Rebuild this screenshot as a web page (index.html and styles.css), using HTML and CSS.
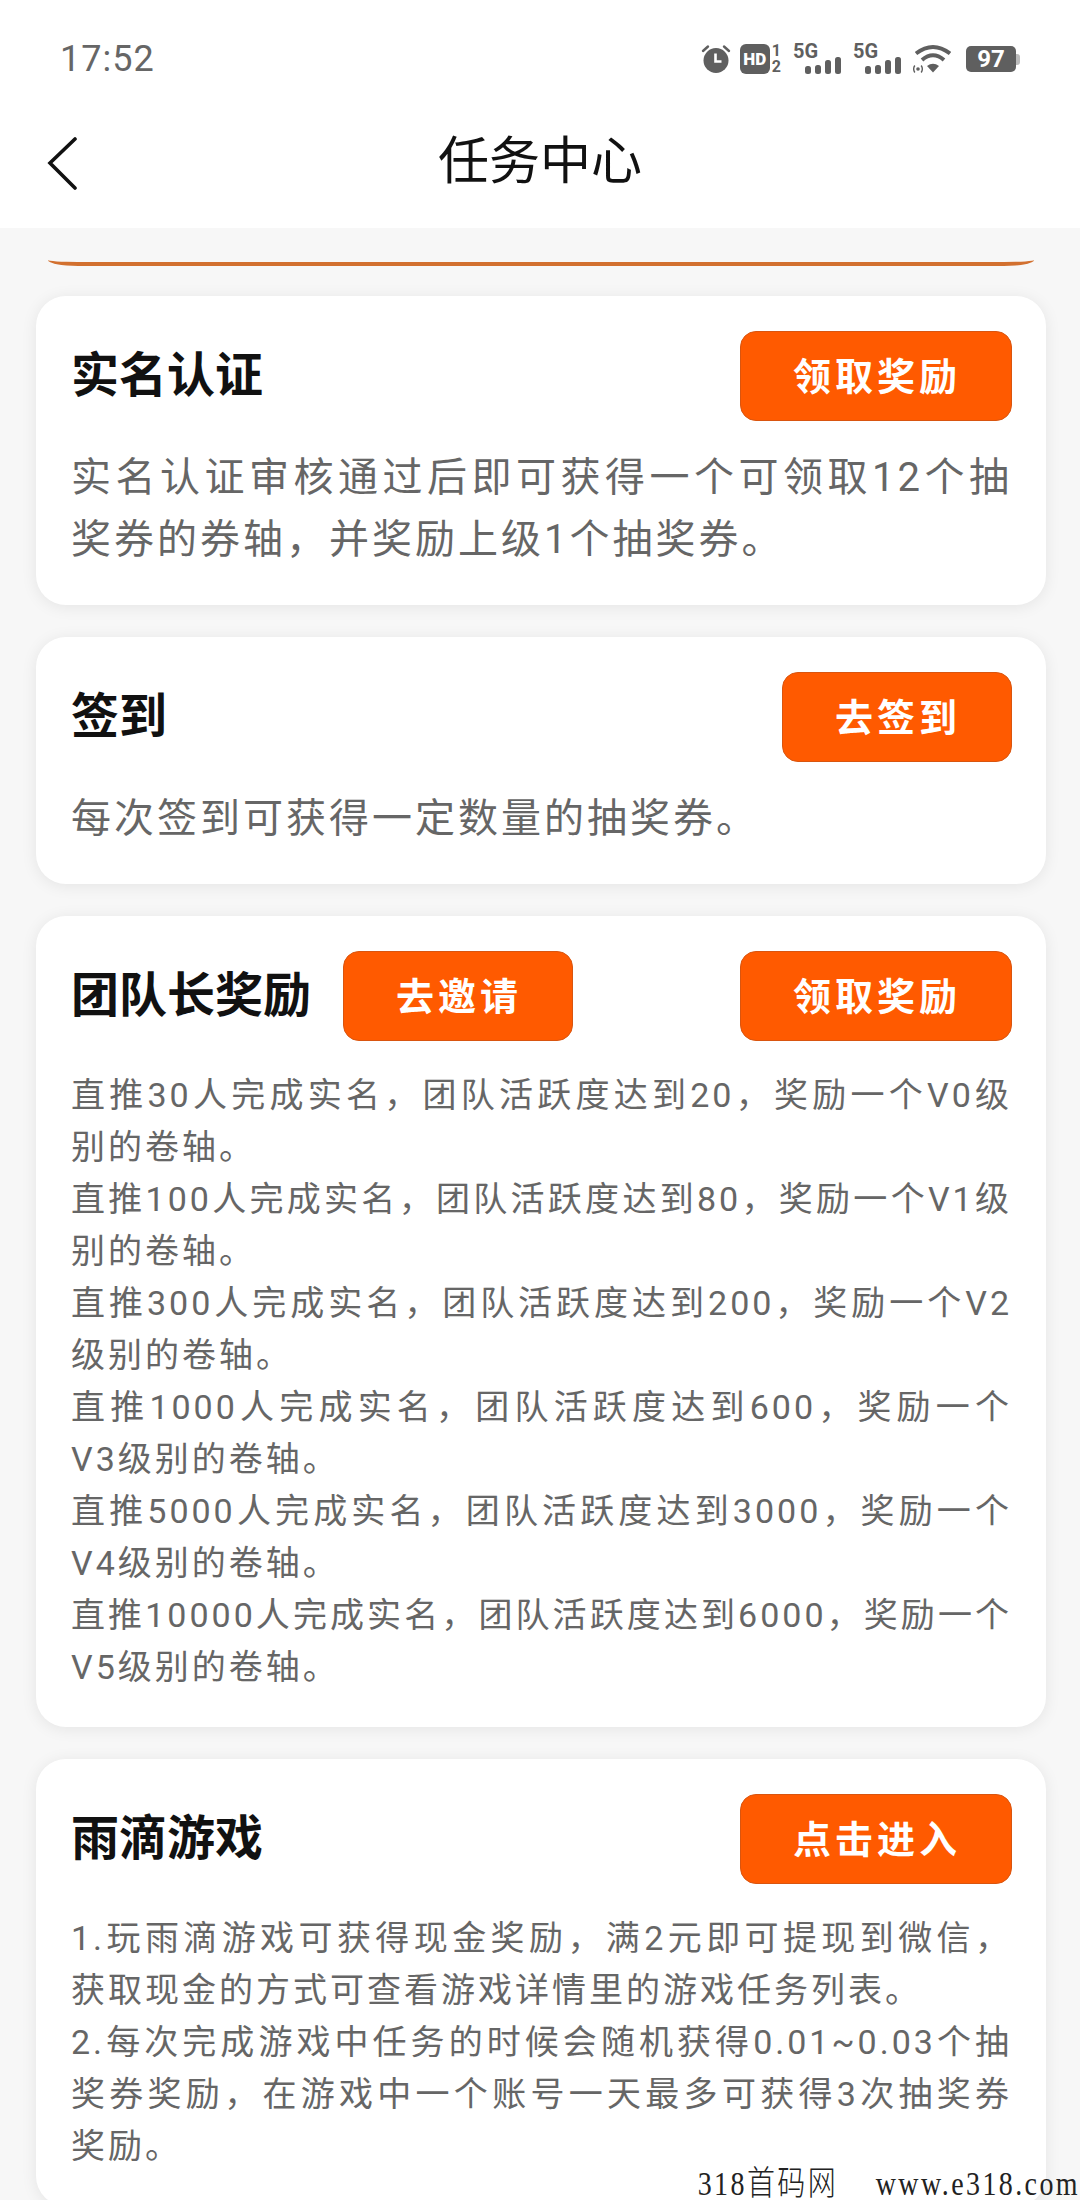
FILE: index.html
```html
<!DOCTYPE html>
<html lang="zh-CN">
<head>
  <meta charset="UTF-8">
  <meta name="viewport" content="width=device-width, initial-scale=1.0">
  <title>任务中心</title>
  <link rel="stylesheet" href="styles.css">
</head>
<body>
  <div class="page">
    <div class="status-bar">
      <span class="time">17:52</span>
      <div class="status-icons">
        <svg class="icon-alarm" width="30" height="30" viewBox="0 0 30 30">
          <circle cx="15" cy="16.5" r="12.5" fill="#5f5f5f"/>
          <path d="M2 7 L7 2.500 M28 7 L23 2.500" stroke="#5f5f5f" stroke-width="2.400" stroke-linecap="round"/>
          <path d="M14.500 9.500 V17.500 H20.500" stroke="#fff" stroke-width="2.600" fill="none"/>
        </svg>
        <div class="hd-group">
          <span class="hd-box">HD</span>
          <span class="hd-nums"><span>1</span><span>2</span></span>
        </div>
        <div class="signal">
          <span class="signal-label">5G</span>
          <svg width="36" height="17" viewBox="0 0 36 17">
            <rect x="0" y="9" width="6" height="8" rx="2.500" fill="#5f5f5f"/>
            <rect x="10" y="8" width="6" height="9" rx="2.500" fill="#5f5f5f"/>
            <rect x="20" y="3" width="6" height="14" rx="2.500" fill="#5f5f5f"/>
            <rect x="30" y="0" width="6" height="17" rx="2.500" fill="#5f5f5f"/>
          </svg>
        </div>
        <div class="signal">
          <span class="signal-label">5G</span>
          <svg width="36" height="17" viewBox="0 0 36 17">
            <rect x="0" y="9" width="6" height="8" rx="2.500" fill="#5f5f5f"/>
            <rect x="10" y="8" width="6" height="9" rx="2.500" fill="#5f5f5f"/>
            <rect x="20" y="3" width="6" height="14" rx="2.500" fill="#5f5f5f"/>
            <rect x="30" y="0" width="6" height="17" rx="2.500" fill="#5f5f5f"/>
          </svg>
        </div>
        <svg class="icon-wifi" width="38" height="30" viewBox="0 0 38 30">
          <path d="M3 9.500 Q20 -3.500 37 9.500" stroke="#5f5f5f" stroke-width="4" fill="none"/>
          <path d="M9 16 Q20 6.500 31 16" stroke="#5f5f5f" stroke-width="4" fill="none"/>
          <path d="M14 22 Q20 17.500 26 22 L20 28.500 Z" fill="#5f5f5f"/>
          <circle cx="5" cy="25" r="1.800" fill="#5f5f5f"/>
          <path d="M1.800 21.500 Q-0.500 25 1.800 28.500 M8.200 21.500 Q10.500 25 8.200 28.500" stroke="#5f5f5f" stroke-width="1.400" fill="none"/>
        </svg>
        <div class="battery">
          <span class="battery-body">97</span>
          <span class="battery-tip"></span>
        </div>
      </div>
    </div>

    <header class="nav">
      <svg class="nav-back" width="30" height="54" viewBox="0 0 30 54">
        <path d="M28 2 L3 26 L28 51" stroke="#111" stroke-width="3.600" fill="none" stroke-linecap="round" stroke-linejoin="miter"/>
      </svg>
      <h1 class="nav-title">任务中心</h1>
    </header>

    <main class="list">
      <div class="prev-card-edge"></div>

      <section class="card">
        <div class="card-head">
          <h2 class="card-title">实名认证</h2>
          <button class="btn">领取奖励</button>
        </div>
        <p class="desc desc-lg">实名认证审核通过后即可获得一个可领取12个抽奖券的券轴，并奖励上级1个抽奖券。</p>
      </section>

      <section class="card">
        <div class="card-head">
          <h2 class="card-title">签到</h2>
          <button class="btn">去签到</button>
        </div>
        <p class="desc desc-lg">每次签到可获得一定数量的抽奖券。</p>
      </section>

      <section class="card">
        <div class="card-head">
          <h2 class="card-title">团队长奖励</h2>
          <button class="btn btn-invite">去邀请</button>
          <button class="btn">领取奖励</button>
        </div>
        <div class="desc-block">
          <p class="desc">直推30人完成实名，团队活跃度达到20，奖励一个V0级别的卷轴。</p>
          <p class="desc">直推100人完成实名，团队活跃度达到80，奖励一个V1级别的卷轴。</p>
          <p class="desc">直推300人完成实名，团队活跃度达到200，奖励一个V2级别的卷轴。</p>
          <p class="desc">直推1000人完成实名，团队活跃度达到600，奖励一个V3级别的卷轴。</p>
          <p class="desc">直推5000人完成实名，团队活跃度达到3000，奖励一个V4级别的卷轴。</p>
          <p class="desc">直推10000人完成实名，团队活跃度达到6000，奖励一个V5级别的卷轴。</p>
        </div>
      </section>

      <section class="card">
        <div class="card-head">
          <h2 class="card-title">雨滴游戏</h2>
          <button class="btn">点击进入</button>
        </div>
        <div class="desc-block">
          <p class="desc">1.玩雨滴游戏可获得现金奖励，满2元即可提现到微信，获取现金的方式可查看游戏详情里的游戏任务列表。</p>
          <p class="desc">2.每次完成游戏中任务的时候会随机获得0.01~0.03个抽奖券奖励，在游戏中一个账号一天最多可获得3次抽奖券奖励。</p>
        </div>
      </section>
    </main>

    <div class="watermark">318首码网&nbsp;&nbsp;&nbsp;&nbsp;www.e318.com</div>
  </div>
</body>
</html>
```

FILE: styles.css
```css
* {
  box-sizing: border-box;
}

body {
  margin: 0;
  background-color: #f7f7f7;
  font-family: Roboto, "Noto Sans CJK SC", sans-serif;
}

.page {
  position: relative;
  width: 1080px;
  height: 2200px;
  overflow: hidden;
}

/* status bar */
.status-bar {
  display: flex;
  justify-content: space-between;
  align-items: center;
  height: 118px;
  padding: 0 60px;
  background-color: #fff;
}

.time {
  font-size: 36px;
  letter-spacing: 1px;
  color: #666;
}

.status-icons {
  display: flex;
  align-items: center;
  color: #5f5f5f;
}

.icon-alarm {
  margin-right: 9px;
}

.hd-group {
  display: flex;
  align-items: center;
  margin-right: 12px;
}

.hd-box {
  width: 30px;
  height: 30px;
  border-radius: 6px;
  background-color: #5f5f5f;
  color: #fff;
  font-size: 17px;
  font-weight: 900;
  line-height: 30px;
  text-align: center;
}

.hd-nums {
  display: flex;
  flex-direction: column;
  margin-left: 2px;
  font-size: 16px;
  font-weight: 700;
  line-height: 16px;
}

.signal {
  position: relative;
  width: 48px;
  height: 30px;
  margin-right: 12px;
}

.signal svg {
  position: absolute;
  right: 0;
  bottom: 0;
}

.signal-label {
  position: absolute;
  top: -4px;
  left: 0;
  font-size: 20px;
  font-weight: 700;
  line-height: 22px;
}

.icon-wifi {
  margin-right: 15px;
}

.battery {
  display: flex;
  align-items: center;
}

.battery-body {
  width: 50px;
  height: 26px;
  border-radius: 5px;
  background-color: #5f5f5f;
  color: #fff;
  font-size: 24px;
  font-weight: 700;
  line-height: 26px;
  text-align: center;
}

.battery-tip {
  width: 4px;
  height: 11px;
  border-radius: 0 3px 3px 0;
  background-color: #bbb;
}

/* nav */
.nav {
  position: relative;
  display: flex;
  justify-content: center;
  align-items: center;
  height: 110px;
  padding-bottom: 32px;
  background-color: #fff;
}

.nav-back {
  position: absolute;
  left: 47px;
  top: 19px;
}

.nav-title {
  margin: 0;
  font-size: 51px;
  font-weight: 400;
  color: #111;
}

/* cards */
.list {
  display: flex;
  flex-direction: column;
  gap: 32px;
  padding: 0 34px 0 36px;
}

.prev-card-edge {
  height: 38px;
  margin: 0 12px -2px;
  border-bottom: 4px solid #d2702f;
  border-radius: 0 0 30px 30px / 0 0 6px 6px;
}

.card {
  padding: 35px 34px 34px 35px;
  border-radius: 30px;
  background-color: #fff;
  box-shadow: 0 2px 16px rgba(0, 0, 0, 0.08);
}

.card-head {
  display: flex;
  align-items: center;
  gap: 32px;
  margin-bottom: 26px;
}

.card-title {
  margin: 0;
  padding-bottom: 10px;
  font-size: 48px;
  font-weight: 700;
  color: #111;
}

.btn {
  height: 90px;
  margin-left: auto;
  padding: 0 50px 6px 52px;
  border: 1px solid #d9550f;
  border-radius: 16px;
  background-color: #ff5a00;
  font-family: inherit;
  font-size: 38px;
  font-weight: 700;
  letter-spacing: 4px;
  color: #fff;
}

.btn-invite {
  margin-left: 0;
}

.desc {
  margin: 0;
  font-size: 34px;
  line-height: 52px;
  letter-spacing: 3px;
  text-align: justify;
  color: #666;
}

.desc-lg {
  font-size: 40px;
  line-height: 62px;
}

.desc-block {
  margin-top: 28px;
}

.watermark {
  position: absolute;
  right: 0;
  bottom: 0;
  padding-bottom: 3px;
  font-family: "Liberation Serif", "Noto Sans CJK SC", serif;
  font-size: 28px;
  font-weight: 300;
  line-height: 20px;
  letter-spacing: 2.4px;
  white-space: nowrap;
  color: #222;
  transform: scaleY(1.22);
  transform-origin: bottom right;
}
```
